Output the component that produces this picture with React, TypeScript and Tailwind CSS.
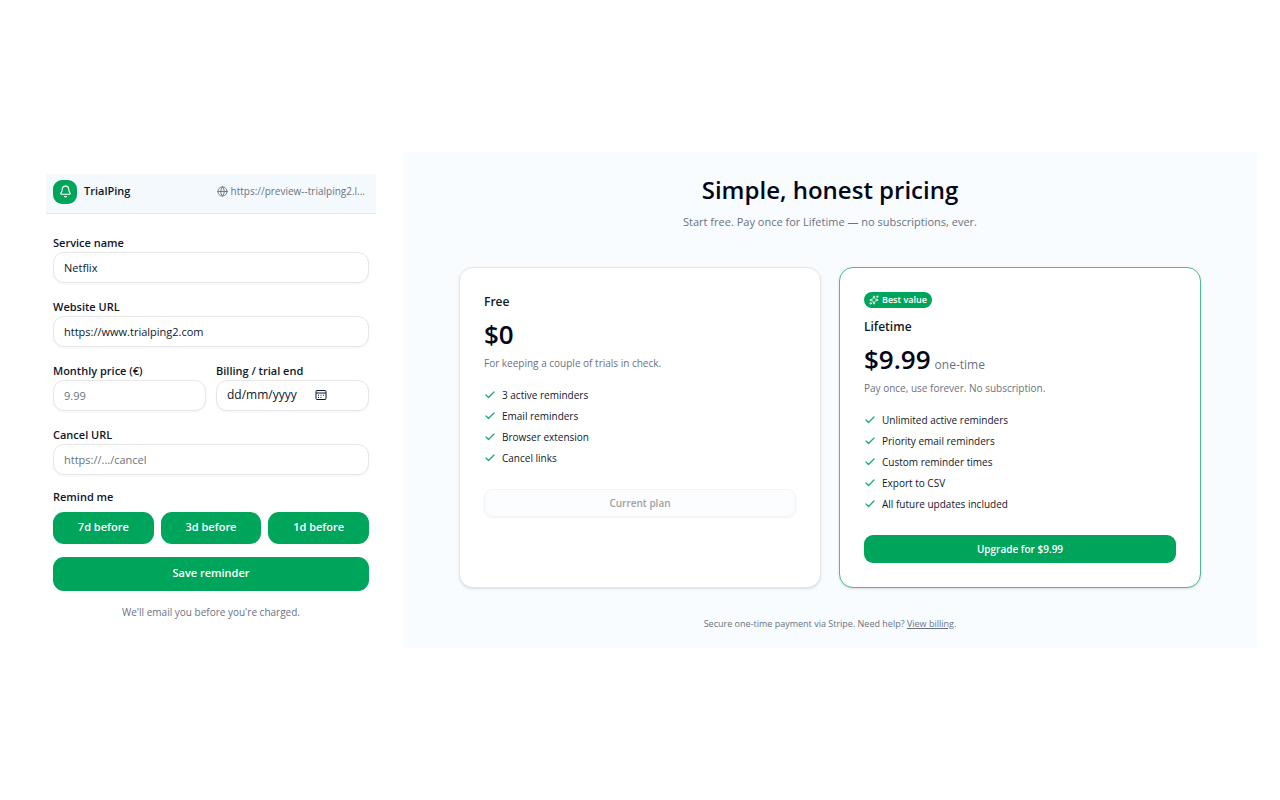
import { useState } from 'react'
import { Bell, Check, Globe, Sparkles } from 'lucide-react'

const plans = [
  {
    name: 'Free',
    price: '$0',
    description: 'For keeping a couple of trials in check.',
    features: ['3 active reminders', 'Email reminders', 'Browser extension', 'Cancel links'],
    cta: 'Current plan',
    current: true,
  },
  {
    name: 'Lifetime',
    price: '$9.99',
    period: 'one-time',
    description: 'Pay once, use forever. No subscription.',
    features: [
      'Unlimited active reminders',
      'Priority email reminders',
      'Custom reminder times',
      'Export to CSV',
      'All future updates included',
    ],
    cta: 'Upgrade for $9.99',
    badge: 'Best value',
  },
]

const labelClass = 'block text-[11px] leading-[18px] font-semibold text-slate-900'
const boxClass =
  'h-[31px] w-full min-w-0 rounded-[11px] border border-gray-200 bg-white px-2.5 text-[11px] text-slate-900 shadow-xs placeholder:text-gray-500'

function CalendarIcon() {
  return (
    <svg width="12" height="12" viewBox="0 0 12 12" fill="none" stroke="currentColor">
      <rect x="1" y="1.5" width="10" height="9" rx="1" />
      <path d="M1 4h10" />
      <path d="M3 6.2h1M5.5 6.2h1M8 6.2h1M3 8.4h1M5.5 8.4h1" />
    </svg>
  )
}

function ReminderPopup() {
  const [name, setName] = useState('Netflix')
  const [url, setUrl] = useState('https://www.trialping2.com')

  return (
    <section className="w-[330px] shrink-0">
      {/* Header */}
      <header className="flex items-center justify-between border-b border-slate-200 bg-[#f4f9fe] px-[7px] pt-1.5 pb-[9px]">
        <div className="flex items-center gap-[7px]">
          <span className="flex size-6 items-center justify-center rounded-[9px] bg-[#00a55c] text-white">
            <Bell size={13} />
          </span>
          <span className="text-[11px] font-semibold text-slate-900">TrialPing</span>
        </div>
        <div className="flex items-center gap-[3px] pr-1 text-[10px] text-gray-500">
          <Globe size={11} />
          <span>https://preview--trialping2.l...</span>
        </div>
      </header>

      {/* Form */}
      <form className="px-[7px] pt-5 pb-1.5" onSubmit={(e) => e.preventDefault()}>
        <div className="flex flex-col gap-[15px]">
          <div>
            <label htmlFor="service" className={labelClass}>Service name</label>
            <input id="service" className={boxClass} value={name} onChange={(e) => setName(e.target.value)} />
          </div>
          <div>
            <label htmlFor="website" className={labelClass}>Website URL</label>
            <input id="website" className={boxClass} value={url} onChange={(e) => setUrl(e.target.value)} />
          </div>
          <div className="grid grid-cols-2 gap-2.5">
            <div>
              <label htmlFor="price" className={labelClass}>Monthly price (€)</label>
              <input id="price" className={boxClass} placeholder="9.99" inputMode="decimal" />
            </div>
            <div>
              <label htmlFor="trial-end" className={labelClass}>Billing / trial end</label>
              <div className={`${boxClass} flex items-center`}>
                <input
                  id="trial-end"
                  className="w-[88px] min-w-0 bg-transparent text-[12px] placeholder:text-slate-900"
                  placeholder="dd/mm/yyyy"
                />
                <button type="button" aria-label="Pick a date">
                  <CalendarIcon />
                </button>
              </div>
            </div>
          </div>
          <div>
            <label htmlFor="cancel" className={labelClass}>Cancel URL</label>
            <input id="cancel" className={boxClass} placeholder="https://.../cancel" />
          </div>
        </div>

        <fieldset className="mt-[13px]">
          <legend className={labelClass}>Remind me</legend>
          <div className="mt-1.5 grid grid-cols-3 gap-[7px]">
            {['7d', '3d', '1d'].map((d) => (
              <button key={d} type="button" className="h-8 rounded-[11px] bg-[#00a55c] text-[11px] font-semibold text-white">
                {`${d} before`}
              </button>
            ))}
          </div>
        </fieldset>

        <button type="submit" className="mt-[13px] h-[34px] w-full rounded-[11px] bg-[#00a55c] text-[11px] font-semibold text-white">
          Save reminder
        </button>
        <p className="mt-3 text-center text-[10px] leading-[18px] text-gray-500">
          We'll email you before you're charged.
        </p>
      </form>
    </section>
  )
}

function Pricing() {
  return (
    <section className="min-w-0 flex-1 bg-[#f8fcff] px-14 pt-5 pb-4 text-center">
      <h1 className="text-2xl leading-9 font-semibold text-slate-950">Simple, honest pricing</h1>
      <p className="mt-1 text-[11px] leading-5 text-gray-500">
        Start free. Pay once for Lifetime — no subscriptions, ever.
      </p>

      {/* Plans */}
      <div className="mt-[35px] grid grid-cols-2 gap-[18px] text-left">
        {plans.map((plan) => (
          <article
            key={plan.name}
            className={`rounded-[14px] border bg-white p-6 shadow-sm ${plan.badge ? 'border-[#4dbd8b]' : 'border-gray-200'}`}
          >
            {plan.badge && (
              <span className="mb-[9px] flex h-4 w-fit items-center gap-[3px] rounded-full bg-[#00a55c] px-[5px] text-[9px] font-semibold text-white">
                <Sparkles size={10} />
                {plan.badge}
              </span>
            )}
            <h2 className="text-[12px] leading-5 font-semibold text-slate-900">{plan.name}</h2>
            <div className="mt-1 flex h-9 items-baseline gap-1 leading-9">
              <span className="text-[26px] font-semibold text-slate-950">{plan.price}</span>
              {plan.period && <span className="text-[12px] text-gray-500">{plan.period}</span>}
            </div>
            <p className="mt-0.5 text-[10px] leading-[18px] text-gray-500">{plan.description}</p>
            <ul className="mt-[15px] flex flex-col gap-[5px]">
              {plan.features.map((f) => (
                <li key={f} className="flex items-center gap-1.5 text-[10px] leading-4 text-slate-900">
                  <Check size={12} strokeWidth={2.5} className="text-[#1fa971]" />
                  {f}
                </li>
              ))}
            </ul>
            <button
              disabled={plan.current}
              className={`mt-[23px] h-7 w-full rounded-[9px] text-[10px] font-semibold ${
                plan.current ? 'border border-gray-100 bg-[#fbfdfe] text-neutral-400 shadow-xs' : 'bg-[#00a55c] text-white'
              }`}
            >
              {plan.cta}
            </button>
          </article>
        ))}
      </div>

      <p className="mt-7 text-[9px] leading-4 text-gray-500">
        Secure one-time payment via Stripe. Need help?{' '}
        <a href="#billing" className="underline">View billing</a>.
      </p>
    </section>
  )
}

export default function App() {
  return (
    <main className="flex min-h-screen items-center gap-[27px] bg-white pr-[23px] pl-[46px] font-['Segoe_UI','Open_Sans',sans-serif]">
      <ReminderPopup />
      <Pricing />
    </main>
  )
}
